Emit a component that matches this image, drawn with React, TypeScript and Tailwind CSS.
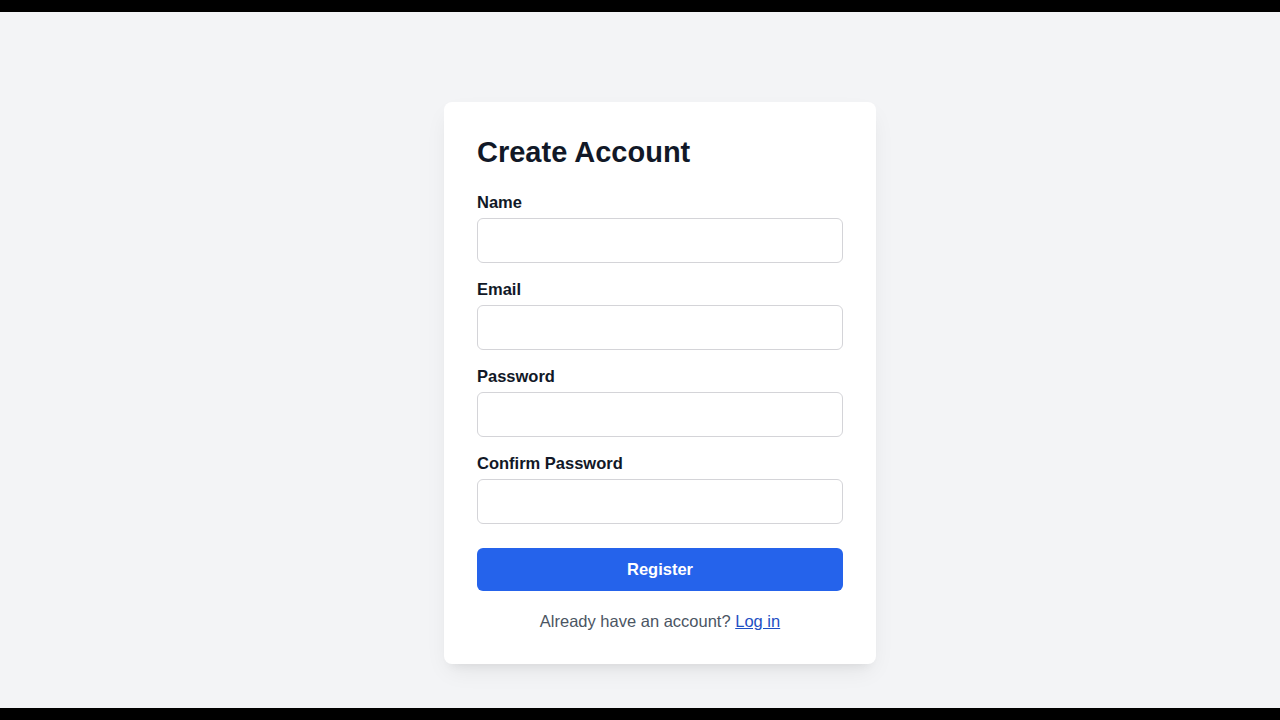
import { useState } from "react";

const fields = [
  { id: "name", label: "Name", type: "text" },
  { id: "email", label: "Email", type: "email" },
  { id: "password", label: "Password", type: "password" },
  { id: "confirm", label: "Confirm Password", type: "password" },
];

export default function App() {
  const [values, setValues] = useState<Record<string, string>>({});

  return (
    <div className="min-h-screen bg-black py-3 font-['Liberation_Sans',Arial,sans-serif]">
      <div className="flex h-[696px] justify-center bg-[#f3f4f6] pt-[90px] pl-10">
        <div className="h-fit w-[432px] rounded-lg bg-white px-[33px] pt-8 pb-[31px] shadow-[0_10px_25px_-5px_rgba(0,0,0,0.08),0_8px_10px_-6px_rgba(0,0,0,0.06)]">
          <h1 className="mb-5 text-[29px] leading-9 font-bold text-[#111827]">Create Account</h1>

          <form className="flex flex-col gap-[14px]" onSubmit={(e) => e.preventDefault()}>
            {fields.map((f) => (
              <div key={f.id} className="flex flex-col gap-1">
                <label htmlFor={f.id} className="text-[16.5px] leading-6 font-bold text-[#111827]">
                  {f.label}
                </label>
                <input
                  id={f.id}
                  type={f.type}
                  value={values[f.id] ?? ""}
                  onChange={(e) => setValues({ ...values, [f.id]: e.target.value })}
                  className="h-[45px] w-full rounded-md border border-[#d4d4d8] bg-white px-3 text-base outline-none"
                />
              </div>
            ))}

            <button
              type="submit"
              className="mt-[10px] h-[43px] w-full rounded-md bg-[#2563eb] text-[16.5px] font-bold text-white"
            >
              Register
            </button>
          </form>

          <p className="mt-[18px] text-center text-[16.5px] leading-6 text-[#4b5563]">
            Already have an account?{" "}
            <a href="#" className="text-[#1e4fc4] underline">
              Log in
            </a>
          </p>
        </div>
      </div>
    </div>
  );
}
